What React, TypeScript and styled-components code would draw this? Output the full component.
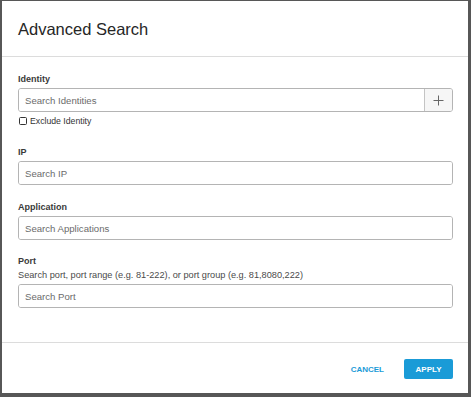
import React from "react";
import styled, { createGlobalStyle } from "styled-components";

const GlobalStyle = createGlobalStyle`
  html, body {
    margin: 0;
    padding: 0;
    background: #575757;
    font-family: "Liberation Sans", Arial, sans-serif;
  }
  * { box-sizing: border-box; }
`;

const Backdrop = styled.div`
  width: 471px;
  height: 397px;
  padding: 1px 0 0 2px;
`;

const Modal = styled.div`
  width: 466px;
  height: 392px;
  background: #fff;
  display: flex;
  flex-direction: column;
`;

const Header = styled.header`
  height: 56px;
  padding: 18px 15px 0 16px;
  border-bottom: 1px solid #dcdcdc;
`;

const Title = styled.h1`
  margin: 0;
  font-size: 16.5px;
  line-height: 20px;
  font-weight: 400;
  color: #262626;
`;

const Body = styled.div`
  flex: 1;
  padding: 16px 15px 0 16px;
  display: flex;
  flex-direction: column;
`;

const Field = styled.div<{ $gap: number }>`
  margin-top: ${(p) => p.$gap}px;
  display: flex;
  flex-direction: column;
`;

const Label = styled.label`
  font-size: 9px;
  line-height: 12px;
  font-weight: 700;
  color: #3a3a3a;
  margin-bottom: 3px;
`;

const Help = styled.div`
  font-size: 9.2px;
  line-height: 12px;
  color: #4a4a4a;
  margin: -1px 0 3px;
`;

const InputGroup = styled.div`
  display: flex;
  height: 24px;
  border: 1px solid #b4b4b4;
  border-radius: 3px;
  overflow: hidden;
`;

const Input = styled.input`
  flex: 1;
  min-width: 0;
  border: 0;
  outline: none;
  padding: 0 6px;
  font-family: "Liberation Sans", Arial, sans-serif;
  font-size: 9.6px;
  color: #333;
  background: #fff;
  &::placeholder {
    color: #6b6b6b;
  }
`;

const AddonButton = styled.button`
  width: 28px;
  border: 0;
  border-left: 1px solid #c4c4c4;
  background: #f6f6f6;
  display: flex;
  align-items: center;
  justify-content: center;
  padding: 0;
  color: #666;
`;

const CheckRow = styled.label`
  margin-top: 3px;
  height: 12px;
  display: flex;
  align-items: center;
  gap: 3px;
  font-size: 8.7px;
  color: #333;
`;

const Box = styled.span`
  width: 8px;
  height: 8px;
  margin-left: 1px;
  border: 1px solid #333;
  border-radius: 1.5px;
  background: #fff;
`;

const Footer = styled.footer`
  height: 51px;
  border-top: 1px solid #dcdcdc;
  padding: 16px 15px 0 16px;
  display: flex;
  justify-content: flex-end;
  align-items: flex-start;
  gap: 10px;
`;

const Button = styled.button<{ $primary?: boolean }>`
  height: 20px;
  padding: 0 ${(p) => (p.$primary ? 11 : 10)}px;
  min-width: ${(p) => (p.$primary ? 49 : 0)}px;
  border: 0;
  border-radius: 2px;
  background: ${(p) => (p.$primary ? "#1a9bd7" : "transparent")};
  color: ${(p) => (p.$primary ? "#fff" : "#1a9bd7")};
  font-family: "Liberation Sans", Arial, sans-serif;
  font-size: 8px;
  font-weight: 700;
  text-transform: uppercase;
`;

function Plus() {
  return (
    <svg width="11" height="11" viewBox="0 0 11 11" fill="none" stroke="#666" strokeWidth="1">
      <path d="M5.5 0.5v10M0.5 5.5h10" />
    </svg>
  );
}

export default function App() {
  return (
    <>
      <GlobalStyle />
      <Backdrop>
        <Modal>
          <Header>
            <Title>Advanced Search</Title>
          </Header>
          <Body>
            <Field $gap={0}>
              <Label>Identity</Label>
              <InputGroup>
                <Input placeholder="Search Identities" />
                <AddonButton aria-label="Add identity">
                  <Plus />
                </AddonButton>
              </InputGroup>
              <CheckRow>
                <Box />
                Exclude Identity
              </CheckRow>
            </Field>
            <Field $gap={19}>
              <Label>IP</Label>
              <InputGroup>
                <Input placeholder="Search IP" />
              </InputGroup>
            </Field>
            <Field $gap={16}>
              <Label>Application</Label>
              <InputGroup>
                <Input placeholder="Search Applications" />
              </InputGroup>
            </Field>
            <Field $gap={15}>
              <Label>Port</Label>
              <Help>Search port, port range (e.g. 81-222), or port group (e.g. 81,8080,222)</Help>
              <InputGroup>
                <Input placeholder="Search Port" />
              </InputGroup>
            </Field>
          </Body>
          <Footer>
            <Button>Cancel</Button>
            <Button $primary>Apply</Button>
          </Footer>
        </Modal>
      </Backdrop>
    </>
  );
}
